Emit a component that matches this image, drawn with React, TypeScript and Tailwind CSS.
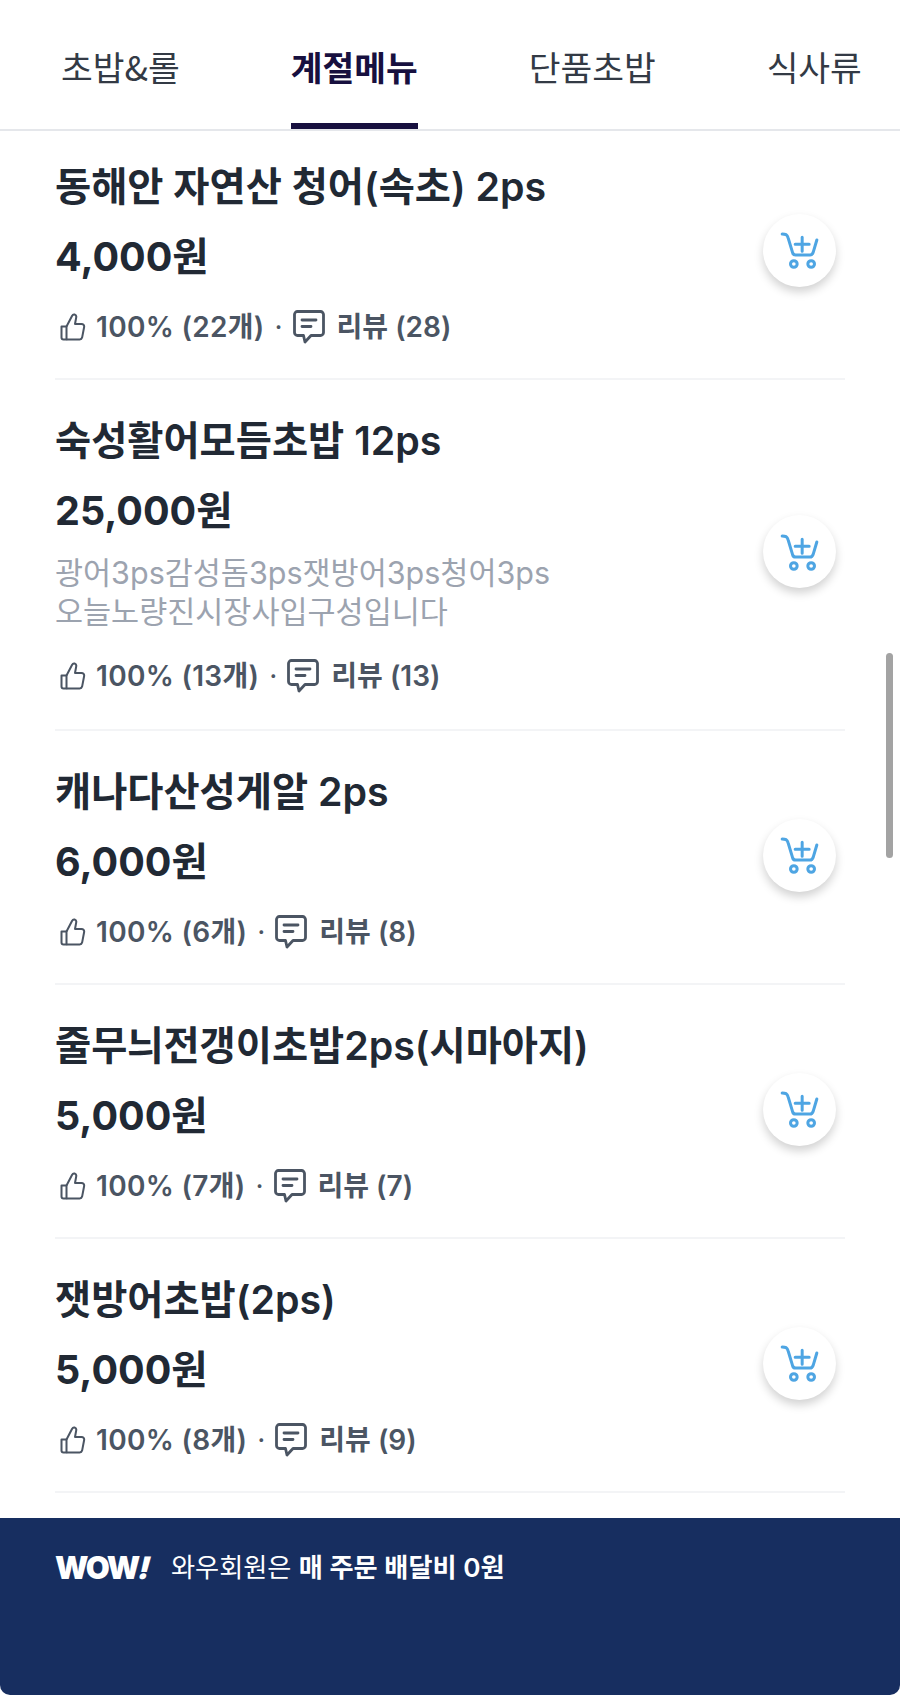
const tabs = [
  { id: 1, title: "초밥&롤" },
  { id: 2, title: "계절메뉴", active: true },
  { id: 3, title: "단품초밥" },
  { id: 4, title: "식사류" },
];

const items = [
  { id: 1, name: "동해안 자연산 청어(속초) 2ps", price: "4,000원", likes: "100% (22개)", reviews: "리뷰 (28)" },
  {
    id: 2,
    name: "숙성활어모듬초밥 12ps",
    price: "25,000원",
    desc: ["광어3ps감성돔3ps잿방어3ps청어3ps", "오늘노량진시장사입구성입니다"],
    likes: "100% (13개)",
    reviews: "리뷰 (13)",
  },
  { id: 3, name: "캐나다산성게알 2ps", price: "6,000원", likes: "100% (6개)", reviews: "리뷰 (8)" },
  { id: 4, name: "줄무늬전갱이초밥2ps(시마아지)", price: "5,000원", likes: "100% (7개)", reviews: "리뷰 (7)" },
  { id: 5, name: "잿방어초밥(2ps)", price: "5,000원", likes: "100% (8개)", reviews: "리뷰 (9)" },
];

function ThumbIcon() {
  return (
    <svg width="26" height="28" viewBox="0 0 26 28" fill="none" stroke="#4b5563" strokeWidth="2" strokeLinejoin="round" className="shrink-0">
      <path d="M1.5 13.5h5v13h-3a2 2 0 0 1-2-2z" />
      <path d="M6.5 13.5 12 3c.6-1.2 1.6-1.8 2.6-1.5 1.3.4 1.900 1.600 1.600 3L15 11h6.500c1.800 0 3 1.500 2.600 3.200l-2 10.400c-.3 1.200-1.200 1.900-2.400 1.900H6.500" />
    </svg>
  );
}

function BubbleIcon() {
  return (
    <svg width="32" height="34" viewBox="0 0 32 34" fill="none" stroke="#4b5563" strokeWidth="2.8" strokeLinejoin="round" strokeLinecap="round" className="shrink-0">
      <path d="M4.500 1.500h23a3 3 0 0 1 3 3v18a3 3 0 0 1-3 3H18l-6 6.500-1.500-6.500h-6a3 3 0 0 1-3-3v-18a3 3 0 0 1 3-3z" />
      <path d="M9 10h14M9 16.500h9" />
    </svg>
  );
}

function CartIcon() {
  return (
    <svg width="47" height="40" viewBox="100 85 140 120" fill="none" stroke="#4ea5e3" strokeWidth="9" strokeLinecap="round" strokeLinejoin="round">
      <path d="M118 97c10 0 15 1 18 12l13 43c1 5 4 8 9 8h44c5 0 7-3 9-8l11-37" />
      <path d="M178 107v42M157 128h42" />
      <circle cx="153" cy="187" r="10" />
      <circle cx="205" cy="187" r="10" />
    </svg>
  );
}

export default function App() {
  return (
    <div className="relative flex h-[1695px] w-[900px] flex-col overflow-hidden bg-white font-['Inter','Noto_Sans_CJK_KR',sans-serif]">
      <nav className="flex h-[131px] shrink-0 gap-[111px] border-b-2 border-[#e5e7eb] pl-[61px] font-['Noto_Sans_CJK_KR',sans-serif] text-[34.5px]">
        {tabs.map((tab) => (
          <div
            key={tab.id}
            className={
              tab.active
                ? "flex h-[129px] items-center whitespace-nowrap border-b-[6px] border-[#17103f] pt-[10px] font-semibold text-[#17103f]"
                : "flex h-[129px] items-center whitespace-nowrap pt-[4px] text-[#333a45]"
            }
          >
            {tab.title}
          </div>
        ))}
      </nav>

      <div className="flex-1 overflow-hidden px-[55px]">
        {items.map((item) => (
          <div
            key={item.id}
            className={
              item.desc
                ? "flex items-center justify-between border-b-2 border-[#f3f4f6] pt-[37px] pb-[37px]"
                : "flex items-center justify-between border-b-2 border-[#f3f4f6] pt-[37px] pb-[35px] first:pt-[32px]"
            }
          >
            <div>
              <div className="text-[39.3px] leading-[48px] font-semibold whitespace-nowrap text-[#212934]">{item.name}</div>
              <div className="mt-[22px] text-[39.5px] leading-[48px] font-bold text-[#212934]">{item.price}</div>
              {item.desc && (
                <div className="mt-[18px] text-[30.5px] leading-[39px] text-[#9ca3af]">
                  {item.desc.map((line) => (
                    <div key={line}>{line}</div>
                  ))}
                </div>
              )}
              <div className={item.desc ? "mt-[29px] flex h-[32px] items-center text-[28px] font-semibold text-[#4b5563]" : "mt-[30px] flex h-[32px] items-center text-[28px] font-semibold text-[#4b5563]"}>
                <span className="ml-[5px]"><ThumbIcon /></span>
                <span className="ml-[10px] tracking-[0.3px]">{item.likes}</span>
                <span className="mr-[10px] ml-[10px] font-normal">·</span>
                <BubbleIcon />
                <span className="ml-[12px]">{item.reviews}</span>
              </div>
            </div>
            <button className="mr-[9px] mb-[6px] flex h-[73px] w-[73px] shrink-0 items-center justify-center rounded-full bg-white shadow-[0_5px_10px_rgba(0,0,0,0.18)]">
              <CartIcon />
            </button>
          </div>
        ))}
      </div>

      <footer className="flex h-[177px] shrink-0 items-start gap-[18px] rounded-b-[10px] bg-[#172e60] px-[55px] pt-[32px] text-white">
        <span className="w-[98px] text-[31px] leading-[36px] font-black tracking-[-1.5px]">
          WOW<span className="inline-block skew-x-[-14deg]">!</span>
        </span>
        <span className="text-[26.2px] leading-[36px] whitespace-nowrap">
          와우회원은 <span className="font-semibold">매 주문 배달비 0원</span>
        </span>
      </footer>

      <div className="absolute top-[653px] right-[7px] h-[205px] w-[7px] rounded-full bg-[#a3a3a3]" />
    </div>
  );
}
